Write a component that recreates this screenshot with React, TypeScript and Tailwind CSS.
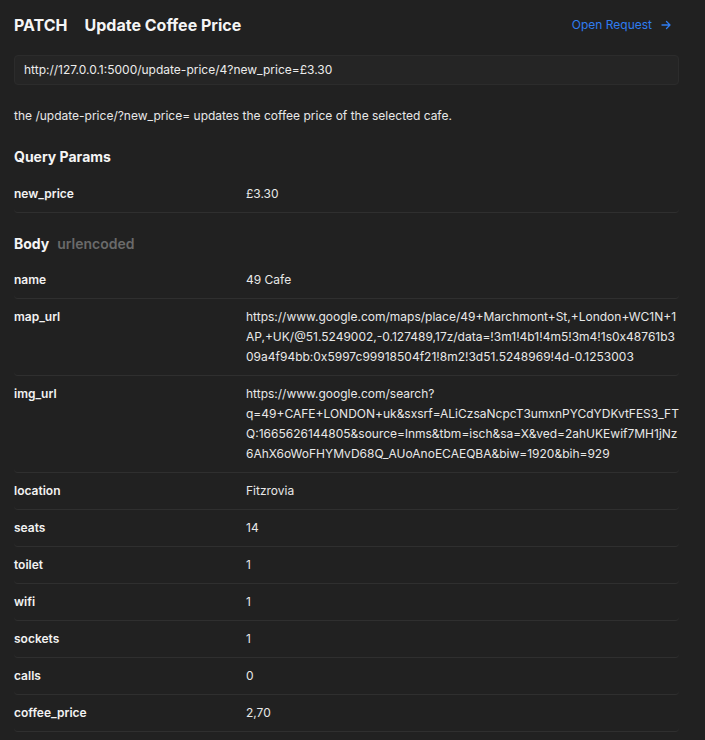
import React from "react";

type Param = { name: string; value: string };

const queryParams: Param[] = [{ name: "new_price", value: "£3.30" }];

const bodyParams: Param[] = [
  { name: "name", value: "49 Cafe" },
  {
    name: "map_url",
    value:
      "https://www.google.com/maps/place/49+Marchmont+St,+London+WC1N+1AP,+UK/@51.5249002,-0.127489,17z/data=!3m1!4b1!4m5!3m4!1s0x48761b309a4f94bb:0x5997c99918504f21!8m2!3d51.5248969!4d-0.1253003",
  },
  {
    name: "img_url",
    value:
      "https://www.google.com/search?q=49+CAFE+LONDON+uk&sxsrf=ALiCzsaNcpcT3umxnPYCdYDKvtFES3_FTQ:1665626144805&source=lnms&tbm=isch&sa=X&ved=2ahUKEwif7MH1jNz6AhX6oWoFHYMvD68Q_AUoAnoECAEQBA&biw=1920&bih=929",
  },
  { name: "location", value: "Fitzrovia" },
  { name: "seats", value: "14" },
  { name: "toilet", value: "1" },
  { name: "wifi", value: "1" },
  { name: "sockets", value: "1" },
  { name: "calls", value: "0" },
  { name: "coffee_price", value: "2,70" },
];

const ParamTable: React.FC<{ params: Param[] }> = ({ params }) => {
  return (
    <div className="flex flex-col">
      {params.map((p) => (
        <div
          key={p.name}
          className="flex flex-row border-b border-[#2f2f2f] rounded-b py-2 text-[12px] leading-5"
        >
          <div className="w-[232px] shrink-0 font-semibold text-[#f2f2f2]">
            {p.name}
          </div>
          <div className="flex-1 min-w-0 text-[#e8e8e8] break-words">
            {p.value}
          </div>
        </div>
      ))}
    </div>
  );
};

export default function App() {
  return (
    <div
      className="min-h-screen bg-[#212121] text-white pl-[14px] pr-[26px] pt-[14px] pb-10"
      style={{ fontFamily: "Inter, 'Noto Sans', sans-serif" }}
    >
      <div className="flex flex-row items-center justify-between h-[22px]">
        <div className="flex flex-row items-center gap-[17px] text-[16px] font-bold text-[#f5f5f5]">
          <span>PATCH</span>
          <span>Update Coffee Price</span>
        </div>
        <a className="flex flex-row items-center gap-[9px] text-[12px] text-[#2f7cf0] pr-2">
          <span>Open Request</span>
          <svg width="10" height="10" viewBox="0 0 10 10" fill="none" stroke="#2f7cf0" strokeWidth="1.3" strokeLinecap="round" strokeLinejoin="round">
            <path d="M1 5h8M5.5 1.5 9 5 5.5 8.5" />
          </svg>
        </a>
      </div>

      <div className="mt-[19px] h-[30px] flex items-center rounded-[4px] border border-[#2c2c2c] bg-[#252525] px-[9px] text-[12px] text-[#ececec]">
        http://127.0.0.1:5000/update-price/4?new_price=£3.30
      </div>

      <p className="mt-[21px] text-[12px] leading-5 text-[#e8e8e8]">
        the /update-price/?new_price= updates the coffee price of the selected cafe.
      </p>

      <h2 className="mt-[21px] text-[14px] leading-5 font-bold text-[#f5f5f5]">
        Query Params
      </h2>
      <div className="mt-[9px]">
        <ParamTable params={queryParams} />
      </div>

      <h2 className="mt-[21px] text-[14px] leading-5 font-bold text-[#f5f5f5] flex flex-row gap-[8px]">
        <span>Body</span>
        <span className="text-[#6a6a6a] font-semibold">urlencoded</span>
      </h2>
      <div className="mt-[8px]">
        <ParamTable params={bodyParams} />
      </div>
    </div>
  );
}
